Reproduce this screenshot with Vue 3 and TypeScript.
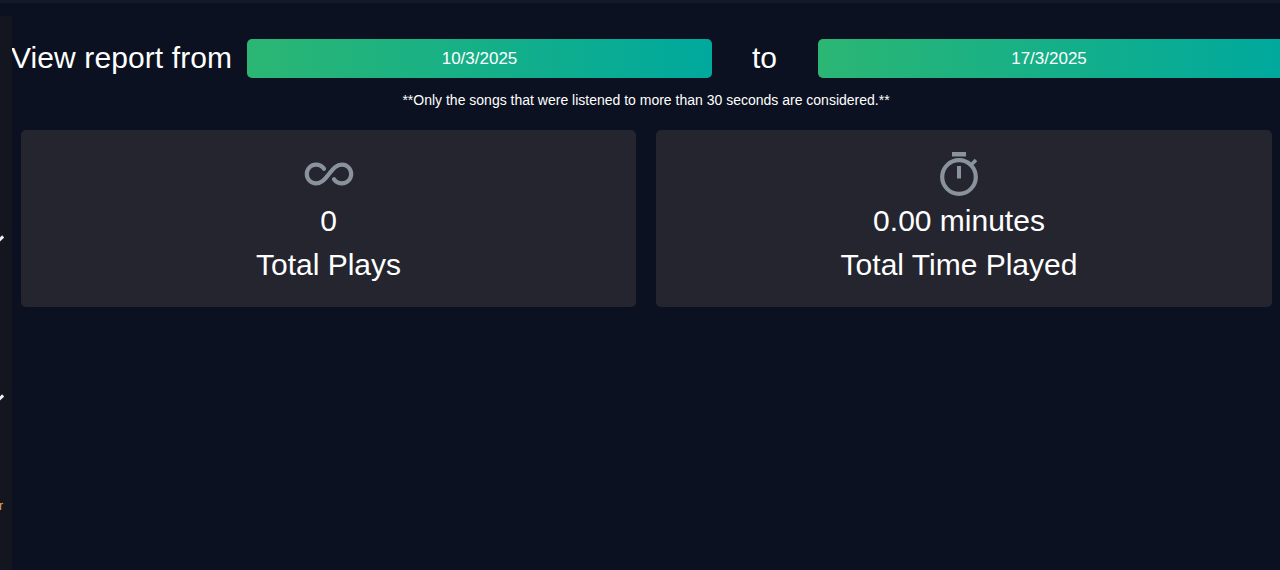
<script setup lang="ts">
const stats = [
  { id: 'plays', value: '0', label: 'Total Plays' },
  { id: 'time', value: '0.00 minutes', label: 'Total Time Played' },
]
</script>

<template>
  <div class="page">
    <aside class="rail">
      <span class="tick tick--one"></span>
      <span class="tick tick--two"></span>
      <span class="rail-letter">r</span>
    </aside>
    <main class="report">
      <div class="range">
        <span class="range-text range-from">View report from</span>
        <button class="date date--from">10/3/2025</button>
        <span class="range-text range-to">to</span>
        <button class="date date--to">17/3/2025</button>
      </div>
      <p class="note">**Only the songs that were listened to more than 30 seconds are considered.**</p>
      <div class="cards">
        <section v-for="s in stats" :key="s.id" class="card" :class="`card--${s.id}`">
          <div class="icon-box">
            <svg v-if="s.id === 'plays'" class="ico-inf" viewBox="0 0 50 26" fill="none" aria-hidden="true">
              <path
                d="M20 7.800C18 5 15.500 3.600 12 3.600C6.800 3.600 2.800 7.800 2.800 13C2.800 18.200 6.800 22.400 12 22.400C18 22.400 21 18 25 13C29 8 32 3.600 38 3.600C43.200 3.600 47.200 7.800 47.200 13C47.200 18.200 43.200 22.400 38 22.400C34.500 22.400 32 21 30 18.200"
                stroke="#8a929d" stroke-width="4.200" stroke-linecap="round"
              />
            </svg>
            <svg v-else class="ico-watch" viewBox="0 0 40 44" fill="none" aria-hidden="true">
              <rect x="13" y="0" width="14" height="4.500" fill="#8a929d"/>
              <circle cx="20" cy="25" r="16.800" stroke="#8a929d" stroke-width="4.200"/>
              <rect x="18" y="14" width="4" height="12.500" fill="#8a929d"/>
              <path d="M32.500 12.500L37 8" stroke="#8a929d" stroke-width="3.500"/>
            </svg>
          </div>
          <div class="value">{{ s.value }}</div>
          <div class="label">{{ s.label }}</div>
        </section>
      </div>
    </main>
  </div>
</template>

<style scoped>
.page {
  display: flex;
  height: 570px;
  overflow: hidden;
  box-sizing: border-box;
  border-top: 3px solid #131a2b;
  background: #0b1120;
  color: #fff;
  font-family: "Liberation Sans", Arial, sans-serif;
}

.rail {
  position: relative;
  flex: 0 0 12px;
  margin-top: 13px;
  background: #14161f;
}

.tick {
  position: absolute;
  left: -2px;
  width: 6px;
  height: 3px;
  background: #f0f0f0;
  transform: rotate(-45deg);
}
.tick--one { top: 221px; }
.tick--two { top: 380px; }

.rail-letter {
  position: absolute;
  left: -1px;
  top: 483px;
  font-size: 12px;
  color: #e0a860;
}

.report {
  flex: 1;
  min-width: 0;
}

.range {
  display: flex;
  align-items: center;
  height: 39px;
  margin-top: 36px;
}

.range-text {
  padding-bottom: 2px;
  font-size: 30px;
  line-height: 37px;
  white-space: nowrap;
}

.range-from {
  width: 236px;
  margin-left: -1px;
  letter-spacing: 0.1px;
}

.range-to {
  margin: 0 41px 0 40px;
}

.date {
  width: 465px;
  height: 39px;
  padding: 0;
  border: 0;
  border-radius: 5px;
  background: linear-gradient(90deg, #2bb673, #00a99d);
  color: #fff;
  font: 17px "Liberation Sans", Arial, sans-serif;
}

.date--to {
  flex: 1;
  border-radius: 5px 0 0 5px;
}

.note {
  margin: 14px 0 0;
  font-size: 14px;
  line-height: 17px;
  text-align: center;
}

.cards {
  display: grid;
  grid-template-columns: 615px 616px;
  gap: 20px;
  margin: 21px 0 0 9px;
}

.card {
  display: flex;
  flex-direction: column;
  align-items: center;
  height: 177px;
  border-radius: 5px;
  background: #25252f;
}

.card--time {
  padding-right: 10px;
  box-sizing: border-box;
}

.icon-box {
  display: flex;
  align-items: center;
  justify-content: center;
  height: 44px;
  margin-top: 22px;
}

.ico-inf {
  width: 50px;
  height: 26px;
}

.ico-watch {
  width: 40px;
  height: 44px;
}

.value,
.label {
  font-size: 30px;
  line-height: 44px;
}

.value {
  margin-top: 3px;
}
</style>

<style>
body {
  background: #0b1120;
}
</style>
